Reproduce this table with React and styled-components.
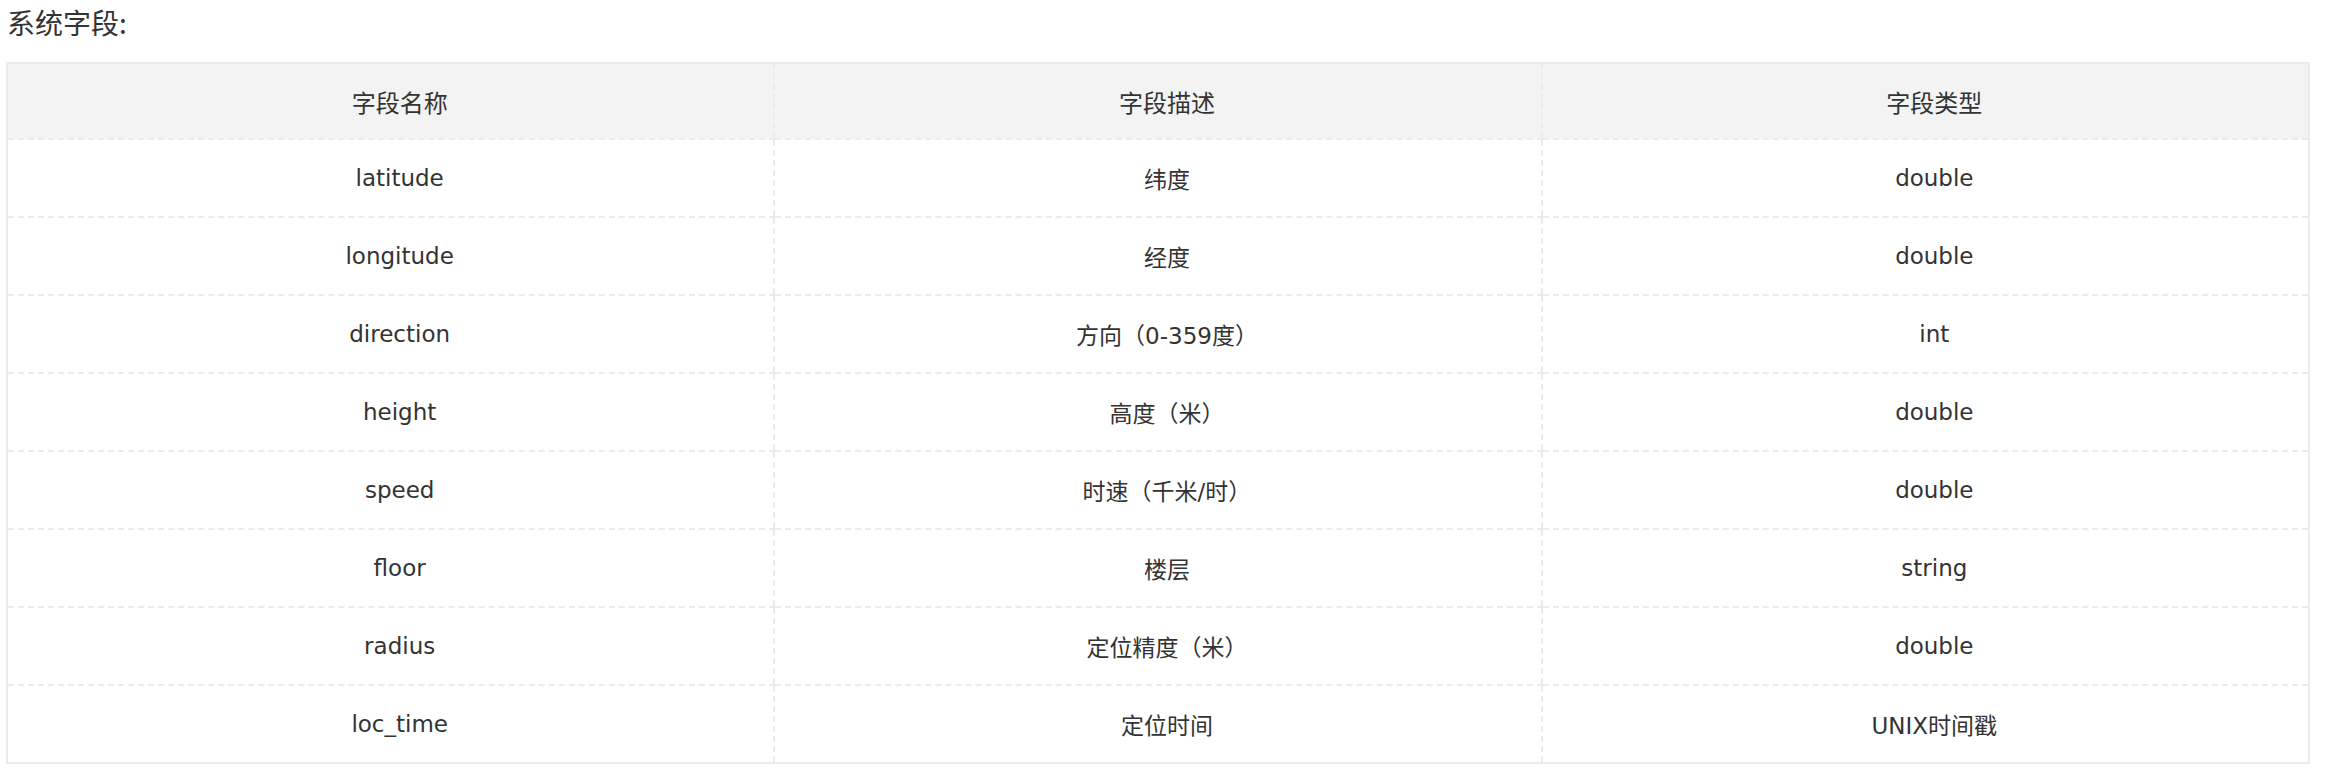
import React from "react";
import styled, { createGlobalStyle } from "styled-components";

const GlobalStyle = createGlobalStyle`
  body {
    margin: 0;
    background: #fff;
    font-family: "DejaVu Sans", "Noto Sans CJK SC", sans-serif;
    color: #333;
  }
`;

const Wrapper = styled.section`
  padding: 0 16px 0 6px;
  & > .title {
    height: 62px;
    padding-left: 1px;
    font-family: "Noto Sans CJK SC", sans-serif;
    font-size: 28px;
    line-height: 44px;
    color: #333;
  }
`;

const Table = styled.table`
  width: 2304px;
  table-layout: fixed;
  border-collapse: collapse;
  border: 2px solid #ebebeb;
  font-size: 23px;
  color: #333;
`;

const HeadCell = styled.th`
  height: 74px;
  padding: 0 0 0 18px;
  font-size: 24px;
  font-weight: normal;
  background-color: #f3f3f3;
  border-left: 2px dashed #ebebeb;
  border-bottom: 2px dashed #ebebeb;
  text-align: center;
  &:first-child {
    border-left: none;
  }
`;

const Cell = styled.td`
  height: 76px;
  padding: 0 0 0 18px;
  text-align: center;
  border-left: 2px dashed #ebebeb;
  border-bottom: 2px dashed #ebebeb;
  &:first-child {
    border-left: none;
  }
`;

const rows = [
  ["latitude", "纬度", "double"],
  ["longitude", "经度", "double"],
  ["direction", "方向（0-359度）", "int"],
  ["height", "高度（米）", "double"],
  ["speed", "时速（千米/时）", "double"],
  ["floor", "楼层", "string"],
  ["radius", "定位精度（米）", "double"],
  ["loc_time", "定位时间", "UNIX时间戳"],
];

function App() {
  return (
    <Wrapper>
      <GlobalStyle />
      <div className="title">系统字段:</div>
      <Table>
        <thead>
          <tr>
            <HeadCell>字段名称</HeadCell>
            <HeadCell>字段描述</HeadCell>
            <HeadCell>字段类型</HeadCell>
          </tr>
        </thead>
        <tbody>
          {rows.map((row) => (
            <tr key={row[0]}>
              {row.map((text, i) => (
                <Cell key={i}>{text}</Cell>
              ))}
            </tr>
          ))}
        </tbody>
      </Table>
    </Wrapper>
  );
}

export default App;
